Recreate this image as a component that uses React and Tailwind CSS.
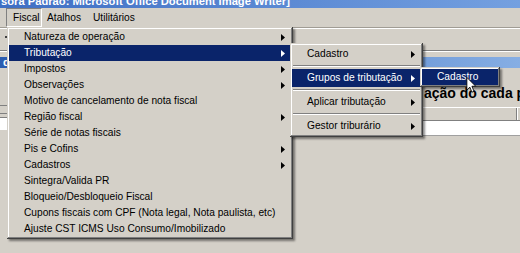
import React from 'react';

const bevel =
  'shadow-[inset_-1px_-1px_0_#404040,inset_1px_1px_0_#d4d0c8,inset_-2px_-2px_0_#808080,inset_2px_2px_0_#ffffff,2px_2px_2px_rgba(0,0,0,0.45)]';

const Arrow = ({ white }) => (
  <svg width="4" height="7" viewBox="0 0 4 7" className="shrink-0">
    <path d="M0 0L4 3.5L0 7Z" fill={white ? '#ffffff' : '#000000'} />
  </svg>
);

const fiscalItems = [
  { label: 'Natureza de operação', sub: true },
  { label: 'Tributação', sub: true, active: true },
  { label: 'Impostos', sub: true },
  { label: 'Observações', sub: true },
  { label: 'Motivo de cancelamento de nota fiscal' },
  { label: 'Região fiscal', sub: true },
  { label: 'Série de notas fiscais' },
  { label: 'Pis e Cofins', sub: true },
  { label: 'Cadastros', sub: true },
  { label: 'Sintegra/Valida PR' },
  { label: 'Bloqueio/Desbloqueio Fiscal' },
  { label: 'Cupons fiscais com CPF (Nota legal, Nota paulista, etc)' },
  { label: 'Ajuste CST ICMS Uso Consumo/Imobilizado' },
];

const tributacaoItems = [
  { label: 'Cadastro' },
  { label: 'Grupos de tributação', active: true },
  { label: 'Aplicar tributação' },
  { label: 'Gestor triburário' },
];

const MenuRow = ({ label, sub, active, height }) => (
  <div
    className={`flex items-center justify-between pl-[15px] pr-[6px] whitespace-nowrap ${height} ${
      active ? 'bg-[#0a246a] text-white' : 'text-black'
    }`}
  >
    <span>{label}</span>
    {sub && <Arrow white={active} />}
  </div>
);

const Separator = () => (
  <div className="h-[6px] flex flex-col justify-center px-[1px]">
    <div className="h-[1px] bg-[#808080]" />
    <div className="h-[1px] bg-white" />
  </div>
);

const Cursor = () => (
  <svg width="11" height="16" viewBox="0 0 12 19" className="absolute left-[466px] top-[77px]">
    <path
      d="M0.5 0.5L0.5 15.5L4 12L6.5 18L9 17L6.5 11L11 11Z"
      fill="#ffffff"
      stroke="#000000"
      strokeWidth="1"
      strokeLinejoin="miter"
    />
  </svg>
);

export default function App() {
  return (
    <div className="relative w-[520px] h-[253px] overflow-hidden bg-[#d4d0c8] font-['Liberation_Sans',Arial,sans-serif] text-[10.2px] text-black">
      {/* title bar of the main window */}
      <div className="h-[8px] overflow-hidden bg-gradient-to-r from-[#3f6fc4] to-[#74a0e0]">
        <div className="mt-[-4px] pl-[1px] text-[11.2px] leading-[11px] font-bold text-white whitespace-nowrap">
          sora Padrão: Microsoft Office Document Image Writer]
        </div>
      </div>

      {/* menu bar */}
      <div className="h-[19px] flex items-stretch">
        <div className="ml-[6px] w-[36px] flex items-center pl-[6px] border-t border-l border-t-[#808080] border-l-[#808080] border-b border-r border-b-white border-r-white">
          Fiscal
        </div>
        <div className="ml-[5px] flex items-center">Atalhos</div>
        <div className="ml-[12px] flex items-center">Utilitários</div>
      </div>

      {/* toolbar area */}
      <div className="h-[30px] border-t border-t-[#a09c94]">
        <div className="h-[1px] bg-white" />
        <div className="ml-[5px] mt-[7px] w-[2px] h-[2px] bg-[#404040]" />
        <div className="mt-[12px] h-[1px] bg-[#808080]" />
        <div className="h-[1px] bg-white" />
      </div>

      {/* child window title */}
      <div className="h-[11px] overflow-hidden bg-gradient-to-r from-[#2a5cb0] to-[#86aee4]">
        <div className="pl-[3px] text-[11px] leading-[11px] font-bold text-white">d</div>
      </div>

      {/* child window content */}
      <div className="flex">
        <div className="w-[30px] shrink-0">
          <div className="mt-[37px] h-[9px] border-t border-b border-[#808080]" />
          <div className="mt-[3px] h-[13px] bg-white border-t border-[#808080]" />
        </div>
        <div className="flex-1 min-w-0">
          <div className="mt-[17px] ml-[394px] h-[16px] leading-[16px] text-[14px] font-bold whitespace-nowrap">
            ação do cada produto
          </div>
          <div className="mt-[6px] ml-[10px]">
            <div className="h-[14px] flex border-t border-white border-b border-b-[#808080]">
              <div className="flex-1" />
              <div className="w-[1px] bg-[#808080]" />
              <div className="w-[1px] bg-white" />
              <div className="w-[2px]" />
            </div>
            <div className="h-[15px] bg-white border-b border-[#a0a0a0]" />
          </div>
        </div>
      </div>

      {/* Fiscal menu */}
      <div className={`absolute left-[7px] top-[27px] w-[286px] bg-[#d4d0c8] p-[2px] ${bevel}`}>
        {fiscalItems.map((item) => (
          <MenuRow key={item.label} {...item} height="h-[16px]" />
        ))}
      </div>

      {/* Tributação submenu */}
      <div className={`absolute left-[290px] top-[43px] w-[133px] bg-[#d4d0c8] p-[2px] ${bevel}`}>
        {tributacaoItems.map((item, i) => (
          <React.Fragment key={item.label}>
            {i > 0 && <Separator />}
            <MenuRow {...item} sub height="h-[18px]" />
          </React.Fragment>
        ))}
      </div>

      {/* Grupos de tributação submenu */}
      <div className={`absolute left-[420px] top-[67px] w-[80px] bg-[#d4d0c8] p-[2px] ${bevel}`}>
        <MenuRow label="Cadastro" active height="h-[16px]" />
      </div>

      <Cursor />
    </div>
  );
}
